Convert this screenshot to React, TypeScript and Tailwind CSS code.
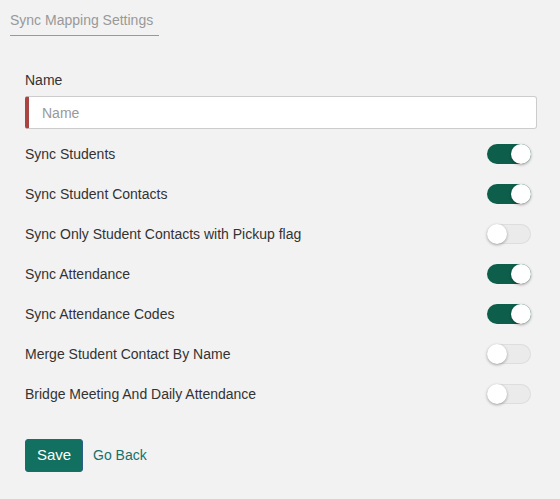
import { useState } from 'react'

const rows = [
  { label: 'Sync Students', on: true },
  { label: 'Sync Student Contacts', on: true },
  { label: 'Sync Only Student Contacts with Pickup flag', on: false },
  { label: 'Sync Attendance', on: true },
  { label: 'Sync Attendance Codes', on: true },
  { label: 'Merge Student Contact By Name', on: false },
  { label: 'Bridge Meeting And Daily Attendance', on: false },
]

function Toggle({ on, onClick }: { on: boolean; onClick: () => void }) {
  return (
    <button
      onClick={onClick}
      className={`relative h-[20px] w-[44px] rounded-full ${
        on ? 'bg-[#0d5e4b]' : 'bg-[#ebebeb] shadow-[inset_0_0_0_1px_#dedede]'
      }`}
    >
      <span
        className={`absolute top-0 h-[20px] w-[20px] rounded-full bg-white shadow-[0_1px_3px_rgba(0,0,0,0.35)] ${
          on ? 'left-[24px]' : 'left-0'
        }`}
      />
    </button>
  )
}

export default function App() {
  const [values, setValues] = useState(rows.map(r => r.on))

  return (
    <div className="min-h-[499px] bg-[#f2f2f2] pt-[10px] font-['Liberation_Sans',Arial,sans-serif] text-[14px] text-[#333]">
      {/* Header tab */}
      <div className="px-[10px]">
        <div className="inline-block border-b border-[#999] pb-[6px] pr-[6px] text-[#999] leading-[18px]">
          Sync Mapping Settings
        </div>
      </div>

      <div className="px-[25px] pr-[23px] pt-[35px]">
        <label className="block leading-[18px]">Name</label>
        <input
          placeholder="Name"
          className="mt-[7px] block h-[33px] w-full rounded-[3px] border border-[#ccc] border-l-[4px] border-l-[#a94442] bg-white px-[13px] text-[14px] outline-none placeholder:text-[#999]"
        />

        <div className="mt-[5px]">
          {rows.map((r, i) => (
            <div key={r.label} className="flex h-[40px] items-center justify-between pr-[6px]">
              <span>{r.label}</span>
              <Toggle
                on={values[i]}
                onClick={() => setValues(v => v.map((x, j) => (j === i ? !x : x)))}
              />
            </div>
          ))}
        </div>

        <div className="mt-[25px] flex items-center gap-[10px]">
          <button className="h-[33px] w-[58px] rounded-[3px] border border-[#2c5f84] bg-[#117060] text-[15px] text-white">
            Save
          </button>
          <a href="#" className="text-[14px] text-[#17706a]">
            Go Back
          </a>
        </div>
      </div>
    </div>
  )
}
